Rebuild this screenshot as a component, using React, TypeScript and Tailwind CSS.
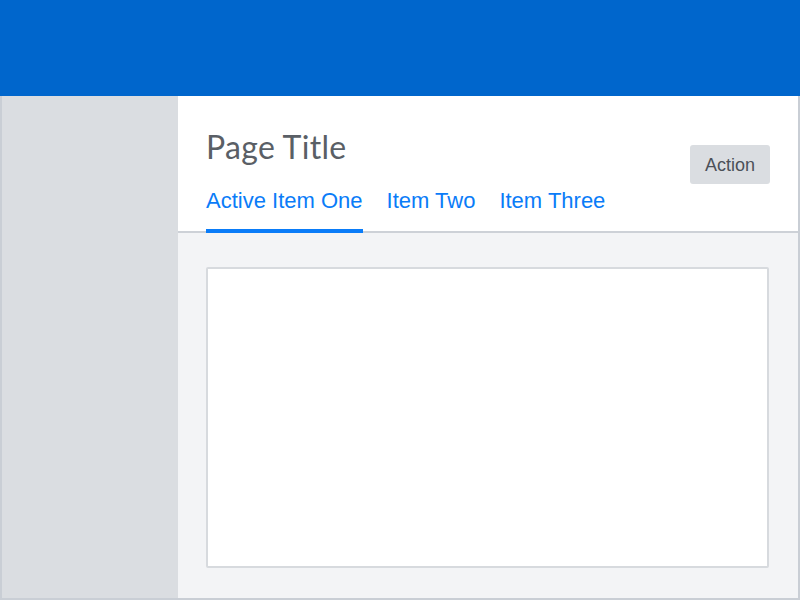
const tabs = ['Active Item One', 'Item Two', 'Item Three'];

export default function App() {
  return (
    <div className="flex h-[600px] w-[800px] flex-col bg-white">
      {/* Top bar */}
      <header className="h-[96px] shrink-0 bg-[#0066cc]" />

      <div className="flex flex-1 border-x-2 border-b-2 border-[#c9ced5]">
        {/* Sidebar */}
        <aside className="w-[176px] shrink-0 bg-[#dadde1]" />

        <main className="flex flex-1 flex-col">
          {/* Page header */}
          <section className="flex items-start justify-between border-b-2 border-[#cdd1d7] bg-white px-[28px] pt-[31px]">
            <div className="flex flex-col">
              <h1 className="h-[40px] text-[32px] leading-[40px] tracking-[0.3px] text-[#5a5f66] [font-family:Lato,sans-serif]">
                Page Title
              </h1>
              <nav className="mt-[20px] flex gap-[24px]">
                {tabs.map((tab, i) => (
                  <a
                    key={tab}
                    className="relative pb-[16px] text-[22px] leading-[28px] text-[#0a7cf8] [font-family:'Liberation_Sans',Arial,sans-serif]"
                  >
                    {tab}
                    {i === 0 && <span className="absolute inset-x-0 -bottom-[2px] h-[4px] bg-[#0a7cf8]" />}
                  </a>
                ))}
              </nav>
            </div>
            <button className="mt-[18px] h-[39px] w-[80px] rounded-[3px] bg-[#dadde1] pt-[2px] text-[18px] text-[#4b5058] [font-family:'Liberation_Sans',Arial,sans-serif]">
              Action
            </button>
          </section>

          {/* Content */}
          <div className="flex flex-1 flex-col bg-[#f3f4f6] pb-[30px] pl-[28px] pr-[29px] pt-[34px]">
            <div className="flex-1 rounded-[2px] border-2 border-[#d7dade] bg-white" />
          </div>
        </main>
      </div>
    </div>
  );
}
